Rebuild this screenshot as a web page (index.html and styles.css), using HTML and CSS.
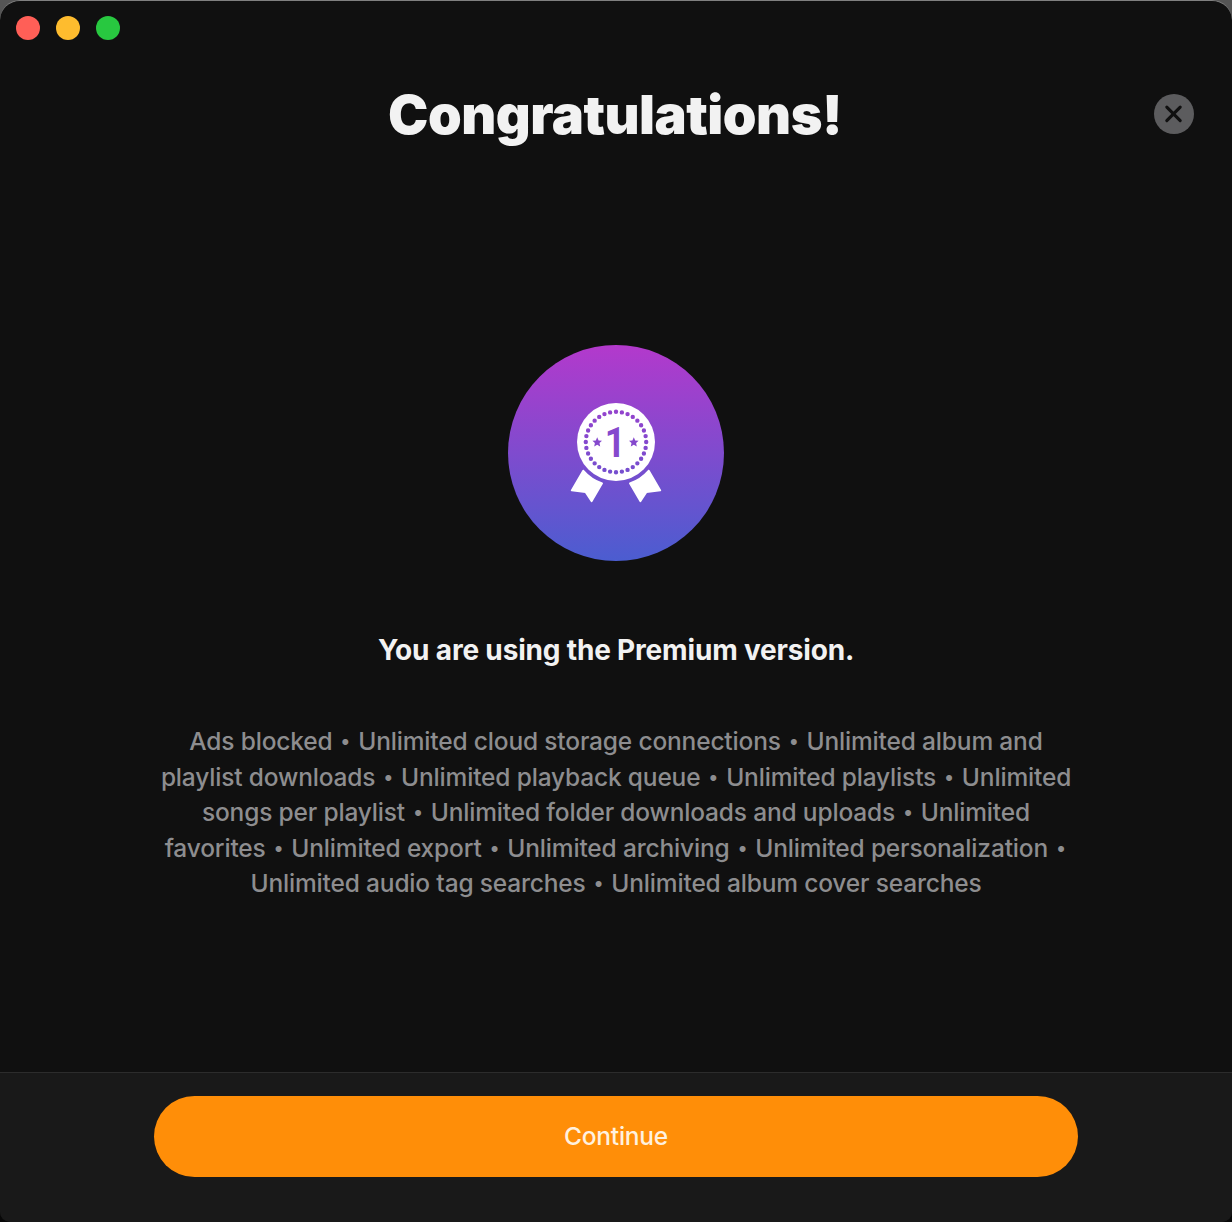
FILE: index.html
```
<!DOCTYPE html>
<html lang="en">
<head>
<meta charset="utf-8">
<title>Premium</title>
<link rel="stylesheet" href="styles.css">
</head>
<body>
<div class="window">
  <div class="titlebar">
    <span class="light light-close"></span>
    <span class="light light-minimize"></span>
    <span class="light light-zoom"></span>
  </div>
  <header class="header">
    <h1 class="title">Congratulations!</h1>
    <button class="close" aria-label="Close">
      <svg width="40" height="40" viewBox="0 0 40 40"><path d="M12.8 13.1 26.2 26.7M26.2 13.1 12.8 26.7" fill="none" stroke="#101010" stroke-width="3.1" stroke-linecap="round"/></svg>
    </button>
  </header>
  <main class="content">
    <svg class="badge" width="216" height="216" viewBox="508 345 216 216">
      <defs>
        <linearGradient id="violet" gradientUnits="userSpaceOnUse" x1="0" y1="345" x2="0" y2="561">
          <stop offset="0" stop-color="#b339cc"/>
          <stop offset="1" stop-color="#4b5dd0"/>
        </linearGradient>
      </defs>
      <circle cx="616" cy="453" r="108" fill="url(#violet)"/>
      <g fill="#fff" stroke="#fff" stroke-linejoin="round">
        <circle cx="616" cy="442" r="39" stroke="none"/>
        <path d="M583.2 470.6A43.9 43.9 0 0 0 602.1 483.4L591.6 501.2 585.5 492 571.7 490.4Z" stroke-width="1.8"/>
        <path d="M648.8 470.6A43.9 43.9 0 0 1 629.9 483.4L640.4 501.2 646.5 492 660.3 490.4Z" stroke-width="1.8"/>
      </g>
      <circle cx="616" cy="442" r="30.2" fill="none" stroke="url(#violet)" stroke-width="4.4" stroke-linecap="round" stroke-dasharray="0 1" pathLength="32"/>
      <g fill="#8549cd">
        <path id="star" d="M597.2 437.3 598.6 440.4 602 440.8 599.5 443.1 600.2 446.5 597.2 444.8 594.2 446.5 594.9 443.1 592.4 440.8 595.8 440.4Z"/>
        <use href="#star" x="36.6"/>
        <text class="rank" transform="translate(615.2 456.5) scale(.84 1)" text-anchor="middle">1</text>
      </g>
    </svg>
    <h2 class="subtitle">You are using the Premium version.</h2>
    <p class="features">Ads blocked <i>•</i> Unlimited cloud storage connections <i>•</i> Unlimited album and<br>playlist downloads <i>•</i> Unlimited playback queue <i>•</i> Unlimited playlists <i>•</i> Unlimited<br>songs per playlist <i>•</i> Unlimited folder downloads and uploads <i>•</i> Unlimited<br>favorites <i>•</i> Unlimited export <i>•</i> Unlimited archiving <i>•</i> Unlimited personalization <i>•</i><br>Unlimited audio tag searches <i>•</i> Unlimited album cover searches</p>
  </main>
  <footer class="footer">
    <button class="continue">Continue</button>
  </footer>
</div>
</body>
</html>
```
FILE: styles.css
```
* { box-sizing: border-box; }
body {
  margin: 0;
  height: 1222px;
  background: linear-gradient(#555 0 50%, #080808 50%);
  font-family: Inter, "Liberation Sans", sans-serif;
  overflow: hidden;
}
.window {
  display: flex;
  flex-direction: column;
  height: 1222px;
  overflow: hidden;
  border-top: 1px solid #808080;
  border-radius: 20px 20px 10px 10px;
  background: #101010;
}
.titlebar {
  display: flex;
  gap: 16px;
  padding: 15px 16px 0;
  height: 54px;
}
.light { width: 24px; height: 24px; border-radius: 50%; }
.light-close { background: #ff5f57; }
.light-minimize { background: #febc2e; }
.light-zoom { background: #28c840; }
.header {
  display: grid;
  grid-template-columns: 1fr auto 1fr;
  align-items: center;
  height: 118px;
  padding: 0 38px;
}
.title {
  grid-column: 2;
  margin: 0;
  padding-right: 2px;
  font-size: 54px;
  font-weight: 900;
  letter-spacing: -0.5px;
  color: #f2f2f2;
}
.close {
  justify-self: end;
  width: 40px;
  height: 40px;
  padding: 0;
  border: 0;
  border-radius: 50%;
  background: #5c5c5e;
}
.close svg { display: block; }
.content {
  display: flex;
  flex: 1;
  flex-direction: column;
  align-items: center;
  padding-top: 172px;
}
.rank { font: 700 43px Roboto, sans-serif; }
.subtitle {
  margin: 69px 0 0;
  font-size: 28px;
  line-height: 40px;
  font-weight: 700;
  letter-spacing: -0.18px;
  color: #f2f2f2;
}
.features {
  margin: 54.4px 0 0;
  font-size: 24.5px;
  line-height: 35.4px;
  font-weight: 450;
  letter-spacing: -0.17px;
  text-align: center;
  white-space: nowrap;
  color: #8d8d8f;
}
.features i {
  display: inline-block;
  width: 13px;
  font-size: 19px;
  font-style: normal;
  line-height: 0;
  vertical-align: 2px;
}
.footer {
  display: flex;
  justify-content: center;
  align-items: flex-start;
  height: 150px;
  padding-top: 23px;
  border-top: 1px solid #2c2c2c;
  background: #191919;
}
.continue {
  width: 924px;
  height: 80.5px;
  padding: 0;
  border: 0;
  border-radius: 41px;
  background: #ff8e08;
  color: #fff1df;
  font: 450 24.5px Inter, sans-serif;
  letter-spacing: -0.25px;
}
```
